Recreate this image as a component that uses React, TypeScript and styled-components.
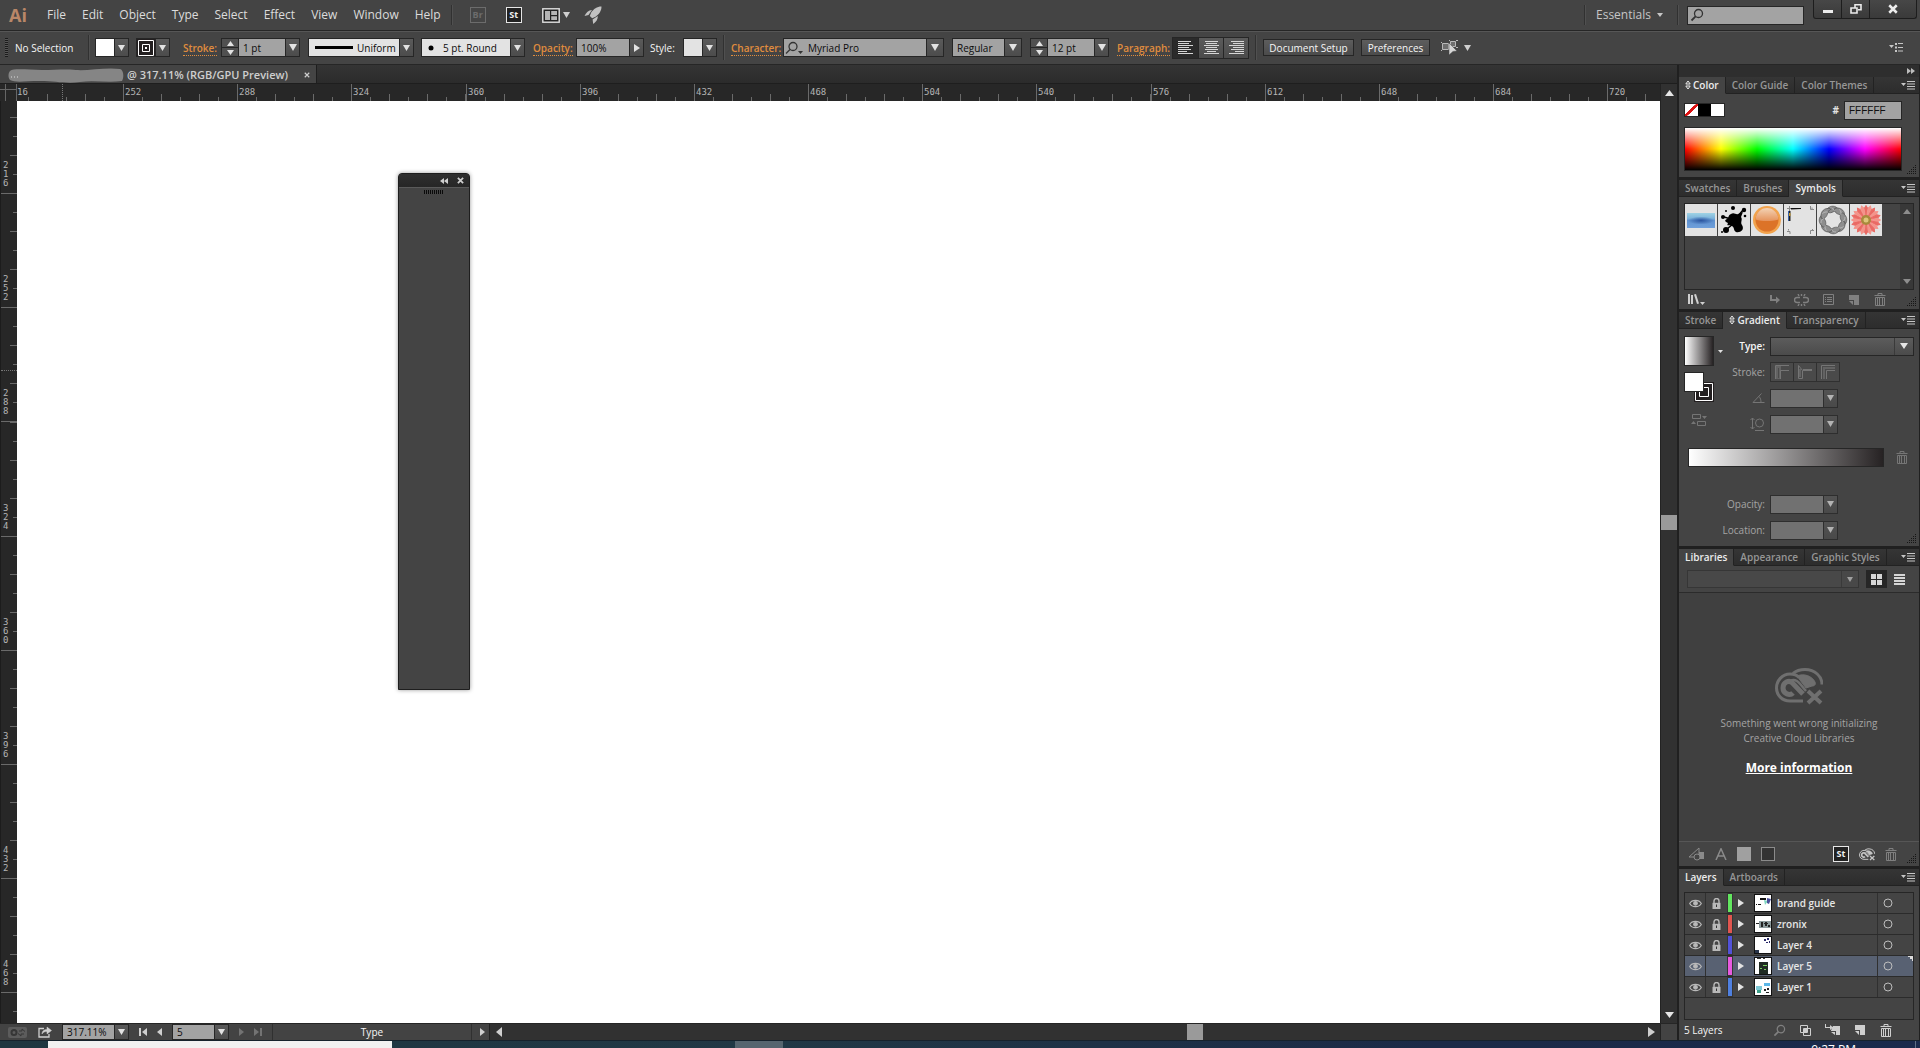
import React from "react";
import styled, { createGlobalStyle } from "styled-components";

const UI = `"Open Sans", "Noto Sans", sans-serif`;
const ORANGE = "#e08d3e";
const LINE = "#262626";

const Global = createGlobalStyle`
  html, body { margin: 0; height: 100%; background: #1f3542; overflow: hidden; }
  *, *::before, *::after { box-sizing: border-box; }
  button, input, select { font: inherit; color: inherit; margin: 0; padding: 0; border: 0; background: none; border-radius: 0; outline: none; }
  button { cursor: default; display: inline-flex; align-items: center; justify-content: center; flex: none; }
  select { appearance: none; }
  svg { display: block; flex: none; }
  p { margin: 0; }
`;

/* ---------- shell ---------- */

const Screen = styled.div`
  display: flex;
  flex-direction: column;
  height: 100vh;
  font: 10px/14px ${UI};
  color: #e2e2e2;
  background: #434343;
`;

const Workspace = styled.div`
  flex: 1;
  min-height: 0;
  display: grid;
  grid-template-columns: minmax(0, 1fr) 243px;
`;

/* ---------- menu bar ---------- */

const MenuBar = styled.header`
  display: flex;
  align-items: center;
  height: 31px;
  padding: 0 3px 0 9px;
  background: #444;
  border-bottom: 1px solid ${LINE};
  font-size: 12px;
  line-height: 16px;
`;

const Logo = styled.div`
  width: 30px;
  font: 700 18px/24px "Open Sans", sans-serif;
  color: #b98768;
`;

const MenuItem = styled.button`
  padding: 0 8px;
  height: 24px;
  color: #dcdcdc;
`;

const Rule = styled.span<{ $h?: number }>`
  flex: none;
  width: 2px;
  height: ${(p) => p.$h ?? 20}px;
  background: #313131;
  border-right: 1px solid #505050;
`;

const AppBadge = styled.button<{ $dim?: boolean }>`
  width: 16px;
  height: 16px;
  border: 1px solid ${(p) => (p.$dim ? "#6c6c6c" : "#e6e6e6")};
  background: ${(p) => (p.$dim ? "#454545" : "#222")};
  color: ${(p) => (p.$dim ? "#6c6c6c" : "#f0f0f0")};
  font: 700 9px/12px ${UI};
`;

const Tools = styled.div`
  display: flex;
  align-items: center;
  gap: 20px;
  padding-left: 17px;
`;

const ToolPair = styled.div`
  display: flex;
  align-items: center;
  gap: 14px;
`;

const IconButton = styled.button<{ $c?: string }>`
  gap: 3px;
  color: ${(p) => p.$c ?? "#cfcfcf"};
`;

const Push = styled.span`
  flex: 1;
`;

const WorkspacePick = styled.label`
  display: flex;
  align-items: center;
  gap: 2px;
  padding: 0 14px 0 10px;
  color: #c6c6c6;
  select { width: 59px; }
`;

const SearchBox = styled.label`
  display: flex;
  align-items: center;
  width: 117px;
  height: 19px;
  margin-left: 8px;
  padding-left: 2px;
  color: #333;
  background: #a3a3a3;
  border: 1px solid ${LINE};
  input { flex: 1; min-width: 0; }
`;

const WindowButtons = styled.div`
  display: flex;
  align-self: flex-start;
  margin-left: 9px;
  height: 19px;
  border: 1px solid #1d1d1d;
  border-top: 0;
  border-radius: 0 0 3px 3px;
  background: linear-gradient(#474747, #3a3a3a);
  color: #ececec;
`;

const WindowButton = styled.button<{ $w: number }>`
  width: ${(p) => p.$w}px;
  & + & { border-left: 1px solid #1d1d1d; }
`;

/* ---------- control bar ---------- */

const ControlBar = styled.div`
  display: flex;
  align-items: center;
  height: 34px;
  padding: 0 17px 1px 5px;
  background: #444;
  border-top: 1px solid #565656;
  border-bottom: 1px solid ${LINE};
`;

const Grip = styled.span`
  width: 3px;
  height: 19px;
  background: repeating-linear-gradient(#1b1b1b 0 1px, #555 1px 2px);
`;

const Title = styled.span`
  width: 80px;
  padding-left: 7px;
  font-weight: 500;
  color: #f6f6f6;
  white-space: nowrap;
`;

const StyleLabel = styled.label`
  width: 33px;
  font-weight: 500;
  color: #f6f6f6;
`;

const Group = styled.div<{ $l?: number }>`
  display: flex;
  align-items: center;
  flex: none;
  margin-left: ${(p) => p.$l ?? 8}px;
`;

const PanelLink = styled.a<{ $w: number }>`
  flex: none;
  width: ${(p) => p.$w}px;
  color: ${ORANGE};
  font-weight: 600;
  text-decoration: none;
  white-space: nowrap;
  span { border-bottom: 1px dotted ${ORANGE}; }
`;

const Box = styled.div<{ $w?: number; $bg?: string; $dim?: boolean }>`
  display: flex;
  align-items: stretch;
  width: ${(p) => (p.$w ? p.$w + "px" : "auto")};
  height: 19px;
  border: 1px solid ${LINE};
  color: #0c0c0c;
  background: ${(p) => p.$bg ?? "#a3a3a3"};
  opacity: ${(p) => (p.$dim ? 0.7 : 1)};
  svg { align-self: center; }
  input, select { flex: 1; min-width: 0; width: 0; padding: 0 0 0 4px; }
`;

const Drop = styled.button<{ $w?: number }>`
  width: ${(p) => p.$w ?? 14}px;
  border-left: 1px solid ${LINE};
  background: linear-gradient(#5a5a5a, #4c4c4c);
  color: #e2e2e2;
`;

const Stepper = styled.div`
  display: grid;
  width: 17px;
  height: 19px;
  border: 1px solid ${LINE};
  border-right: 0;
  background: #505050;
  color: #e2e2e2;
  button + button { border-top: 1px solid ${LINE}; }
`;

const Chip = styled.span<{ $c: string }>`
  flex: 1;
  background: ${(p) => p.$c};
  display: flex;
  align-items: center;
  justify-content: center;
`;

const AlignGroup = styled.div`
  display: flex;
  height: 22px;
  border: 1px solid ${LINE};
`;

const AlignButton = styled.button<{ $on?: boolean }>`
  width: 25px;
  color: #d6d6d6;
  background: ${(p) => (p.$on ? "#2b2b2b" : "linear-gradient(#5b5b5b, #4b4b4b)")};
  & + & { border-left: 1px solid ${LINE}; }
`;

const PushButton = styled.button<{ $w: number }>`
  width: ${(p) => p.$w}px;
  height: 17px;
  border: 1px solid ${LINE};
  background: linear-gradient(#5d5d5d, #4b4b4b);
  color: #f6f6f6;
  font-weight: 500;
  white-space: nowrap;
`;

/* ---------- document ---------- */

const Doc = styled.main`
  display: grid;
  grid-template-columns: 17px minmax(0, 1fr) 17px;
  grid-template-rows: 19px 17px minmax(0, 1fr) 17px;
  min-height: 0;
`;

const TabStrip = styled.div`
  grid-column: 1 / -1;
  display: flex;
  background: linear-gradient(#343434, #2b2b2b);
  border-bottom: 1px solid #1e1e1e;
`;

const DocTab = styled.div`
  display: flex;
  align-items: center;
  width: 317px;
  padding: 2px 0 0 8px;
  background: #444;
  border-right: 1px solid #1e1e1e;
  font-size: 11px;
  font-weight: 600;
  color: #cfcfcf;
  white-space: nowrap;
  button { margin-left: auto; margin-right: 6px; color: #d0d0d0; }
`;

const DocName = styled.span`
  padding-left: 3px;
`;

const Corner = styled.div`
  background:
    linear-gradient(#666, #666) 0 5px / 100% 1px no-repeat,
    linear-gradient(#666, #666) 5px 0 / 1px 100% no-repeat,
    linear-gradient(#666, #666) 16px 0 / 1px 100% no-repeat,
    #272727;
`;

const HRuler = styled.div`
  position: relative;
  display: flex;
  overflow: hidden;
  background: #272727;
`;

const HSegment = styled.span<{ $len: number; $clip?: boolean }>`
  flex: none;
  width: ${(p) => p.$len}px;
  margin-left: ${(p) => (p.$clip ? -8 : 0)}px;
  padding-left: ${(p) => (p.$clip ? 8 : 2)}px;
  font: 9px/17px "DejaVu Sans Mono", monospace;
  color: #b4b4b4;
  background:
    linear-gradient(#6a6a6a, #6a6a6a) 0 0 / 1px 100% no-repeat,
    linear-gradient(to right, #6a6a6a 1px, transparent 1px) 0 100% / 38px 7px repeat-x,
    linear-gradient(to right, #6a6a6a 1px, transparent 1px) 0 100% / 19px 4px repeat-x;
`;

const HCursor = styled.span`
  position: absolute;
  left: 45px;
  top: 0;
  height: 100%;
  border-left: 1px dotted #777;
`;

const VRuler = styled.div`
  position: relative;
  overflow: hidden;
  background: #272727;
  border-left: 1px solid #1c1c1c;
`;

const VSegment = styled.span<{ $len: number; $first?: boolean }>`
  display: flex;
  flex-direction: column;
  justify-content: flex-end;
  height: ${(p) => p.$len}px;
  margin-top: ${(p) => (p.$first ? -21 : 0)}px;
  padding: 0 0 6px 2px;
  font: 9px/9px "DejaVu Sans Mono", monospace;
  color: #b4b4b4;
  background:
    linear-gradient(#6a6a6a, #6a6a6a) 0 100% / 100% 1px no-repeat,
    linear-gradient(to top, #6a6a6a 1px, transparent 1px) 100% 100% / 7px 38px repeat-y,
    linear-gradient(to top, #6a6a6a 1px, transparent 1px) 100% 100% / 4px 19px repeat-y;
  b { font-weight: 400; }
`;

const VCursor = styled.span`
  position: absolute;
  left: 0;
  top: 269px;
  width: 100%;
  border-top: 1px dotted #777;
`;

const Canvas = styled.div`
  position: relative;
  background: #fff;
`;

const VScroll = styled.div`
  grid-column: 3;
  grid-row: 2 / 4;
  display: flex;
  flex-direction: column;
  background: #313131;
  border-left: 1px solid #222;
  color: #e6e6e6;
  button { height: 17px; }
`;

const VTrack = styled.div`
  flex: 1;
  display: flex;
  flex-direction: column;
  &::before { content: ""; flex: 414; }
  &::after { content: ""; flex: 476; }
`;

const VThumb = styled.div`
  height: 15px;
  background: #9a9a9a;
`;

const StatusBar = styled.footer`
  grid-column: 1 / -1;
  display: flex;
  align-items: center;
  background: #434343;
  border-top: 1px solid ${LINE};
  padding-left: 8px;
`;

const StatusBox = styled(Box)`
  height: 16px;
`;

const StatusPart = styled.div<{ $w: number; $gap?: number }>`
  flex: none;
  display: flex;
  align-items: center;
  gap: ${(p) => p.$gap ?? 8}px;
  width: ${(p) => p.$w}px;
`;

const StatusText = styled.div`
  flex: none;
  display: flex;
  align-items: center;
  justify-content: center;
  width: 200px;
  height: 16px;
  border: solid #303030;
  border-width: 0 1px;
  font-weight: 500;
  color: #f6f6f6;
`;

const HScroll = styled.div`
  flex: 1;
  display: flex;
  align-items: center;
  height: 16px;
  padding: 0 5px 0 6px;
  background: #313131;
  border-left: 1px solid #222;
  color: #e6e6e6;
`;

const HTrack = styled.div`
  flex: 1;
  display: flex;
  height: 100%;
  &::before { content: ""; flex: 685; }
  &::after { content: ""; flex: 445; }
`;

const HThumb = styled.div`
  width: 16px;
  background: #9a9a9a;
`;

const ScrollCorner = styled.div`
  width: 17px;
  height: 16px;
  border-left: 1px solid #222;
  background: #434343;
`;

const Palette = styled.section`
  position: absolute;
  left: 381px;
  top: 72px;
  width: 72px;
  height: 517px;
  display: flex;
  flex-direction: column;
  border: 1px solid #1e1e1e;
  border-radius: 4px 4px 0 0;
  background: #444;
  box-shadow: 0 0 4px rgba(0, 0, 0, 0.4);
`;

const PaletteHead = styled.div`
  display: flex;
  justify-content: flex-end;
  align-items: center;
  gap: 9px;
  height: 14px;
  padding-right: 5px;
  border-bottom: 1px solid #5a5a5a;
  border-radius: 3px 3px 0 0;
  background: linear-gradient(#2f2f2f, #262626);
  color: #c4c4c4;
`;

const PaletteGrip = styled.span`
  align-self: center;
  width: 20px;
  height: 4px;
  margin-top: 2px;
  background: repeating-linear-gradient(to right, #0a0a0a 0 1px, #444 1px 2px);
`;

/* ---------- dock ---------- */

const Dock = styled.aside`
  display: flex;
  flex-direction: column;
  min-height: 0;
  border-left: 2px solid #202020;
  border-right: 1px solid #202020;
  background: #202020;
`;

const DockHead = styled.div`
  display: flex;
  align-items: center;
  justify-content: flex-end;
  height: 12px;
  padding-right: 4px;
  background: #2e2e2e;
  color: #bdbdbd;
`;

const Panel = styled.section<{ $grow?: boolean }>`
  display: flex;
  flex-direction: column;
  flex: ${(p) => (p.$grow ? "1 1 0" : "none")};
  min-height: 0;
  margin-bottom: 3px;
  background: #444;
  &:last-child { margin-bottom: 0; }
`;

const Tabs = styled.div`
  display: flex;
  height: 17px;
  background: linear-gradient(#353535, #2c2c2c);
`;

const Tab = styled.button<{ $on?: boolean }>`
  gap: 2px;
  padding: 0 6px;
  font-weight: 600;
  color: ${(p) => (p.$on ? "#ececec" : "#969696")};
  background: ${(p) => (p.$on ? "#444" : "none")};
  border-right: 1px solid #222;
  border-bottom: 1px solid ${(p) => (p.$on ? "#444" : "#222")};
`;

const TabFill = styled.div`
  flex: 1;
  display: flex;
  align-items: center;
  justify-content: flex-end;
  padding-right: 4px;
  border-bottom: 1px solid #222;
`;

const Body = styled.div`
  position: relative;
  flex: 1;
  min-height: 0;
  display: flex;
  flex-direction: column;
  padding: 0 5px;
`;

const Resize = styled.span`
  position: absolute;
  right: 2px;
  bottom: 2px;
  color: #161616;
`;

const ColorRow = styled.div`
  display: flex;
  align-items: center;
  justify-content: space-between;
  height: 20px;
  margin-top: 6px;
  padding-right: 12px;
`;

const MiniSwatches = styled.div`
  display: flex;
  border: 1px solid ${LINE};
`;

const MiniSwatch = styled.button<{ $bg: string }>`
  width: 13px;
  height: 12px;
  background: ${(p) => p.$bg};
`;

const HexField = styled.label`
  display: flex;
  align-items: center;
  gap: 5px;
  font-weight: 700;
  input {
    width: 58px;
    height: 19px;
    padding-left: 4px;
    border: 1px solid ${LINE};
    background: #a3a3a3;
    color: #111;
    font: 10px/14px "Liberation Sans", Arial, sans-serif;
  }
`;

const Spectrum = styled.div`
  height: 44px;
  margin: 7px 12px 6px 0;
  border: 1px solid ${LINE};
  background:
    linear-gradient(#fff, rgba(255, 255, 255, 0) 50%),
    linear-gradient(rgba(0, 0, 0, 0) 50%, #000),
    linear-gradient(to right, #f00, #ff0, #0f0, #0ff, #00f, #f0f, #f00);
`;

const SymbolWell = styled.div`
  display: flex;
  justify-content: space-between;
  height: 87px;
  margin-top: 6px;
  border: 1px solid ${LINE};
`;

const SymbolList = styled.div`
  display: flex;
  align-items: flex-start;
  gap: 1px;
`;

const SymbolTile = styled.button`
  width: 32px;
  height: 32px;
  background: #e3e3e3;
`;

const MiniScroll = styled.div`
  display: flex;
  flex-direction: column;
  justify-content: space-between;
  align-items: center;
  width: 13px;
  padding: 5px 0;
  background: #383838;
  color: #8d8d8d;
`;

const PanelFoot = styled.div<{ $h: number; $gap: number; $l?: number; $r: number }>`
  display: flex;
  align-items: center;
  gap: ${(p) => p.$gap}px;
  height: ${(p) => p.$h}px;
  padding: 0 ${(p) => p.$r}px 0 ${(p) => p.$l ?? 0}px;
  color: #808080;
`;

const GradTop = styled.div`
  display: grid;
  grid-template-columns: 39px minmax(0, 1fr);
  padding-top: 7px;
`;

const GradSide = styled.div`
  display: flex;
  flex-direction: column;
  gap: 6px;
`;

const GradPick = styled.div`
  display: flex;
  align-items: center;
  gap: 4px;
`;

const GradSwatch = styled.button`
  width: 30px;
  height: 30px;
  border: 1px solid ${LINE};
  background: linear-gradient(to right, #fff, #262223);
`;

const FillStroke = styled.div`
  position: relative;
  width: 30px;
  height: 30px;
  margin-bottom: 5px;
`;

const FillBox = styled.button`
  position: absolute;
  left: 0;
  top: 0;
  width: 20px;
  height: 20px;
  border: 1px solid ${LINE};
  background: #fff;
`;

const StrokeBox = styled.button`
  position: absolute;
  right: 0;
  bottom: 0;
  width: 20px;
  height: 20px;
`;

const Fields = styled.div`
  display: flex;
  flex-direction: column;
  gap: 6px;
`;

const Field = styled.div`
  display: grid;
  grid-template-columns: 42px minmax(0, 1fr);
  column-gap: 5px;
  align-items: center;
  height: 20px;
`;

const FieldLabel = styled.label<{ $on?: boolean }>`
  display: flex;
  justify-content: flex-end;
  font-weight: ${(p) => (p.$on ? 600 : 500)};
  color: ${(p) => (p.$on ? "#f6f6f6" : "#a4a4a4")};
`;

const WideSelect = styled.div<{ $dim?: boolean }>`
  display: flex;
  align-items: center;
  width: 100%;
  height: ${(p) => (p.$dim ? 18 : 19)}px;
  padding-right: 5px;
  border: 1px solid ${(p) => (p.$dim ? "#363636" : LINE)};
  background: ${(p) => (p.$dim ? "#484848" : "linear-gradient(#5c5c5c, #4b4b4b)")};
  color: ${(p) => (p.$dim ? "#a0a0a0" : "#e6e6e6")};
  select { flex: 1; min-width: 0; height: 100%; border-right: 1px solid #3a3a3a; margin-right: 5px; }
`;

const StrokeModes = styled.div`
  display: flex;
  width: 70px;
  border: 1px solid #303030;
  button { flex: 1; height: 18px; color: #757575; background: #4a4a4a; }
  button + button { border-left: 1px solid #303030; }
`;

const GradBarRow = styled.div`
  display: flex;
  align-items: center;
  gap: 12px;
  padding: 14px 6px 27px 4px;
  color: #767676;
`;

const GradBar = styled.div`
  flex: 1;
  height: 19px;
  border: 1px solid ${LINE};
  background: linear-gradient(to right, #fff, #262223);
`;

const GradBottom = styled(Fields)`
  padding: 0 0 6px 39px;
`;

const LibBar = styled.div`
  display: flex;
  align-items: center;
  gap: 7px;
  height: 27px;
  margin: 0 -5px;
  padding: 0 9px 0 8px;
  border-bottom: 1px solid #2b2b2b;
`;

const ViewSwitch = styled.div`
  display: flex;
  gap: 2px;
`;

const ViewButton = styled.button<{ $on?: boolean }>`
  width: 21px;
  height: 18px;
  background: ${(p) => (p.$on ? "#262626" : "none")};
  color: #d6d6d6;
`;

const LibMessage = styled.div`
  flex: 1;
  display: flex;
  flex-direction: column;
  align-items: center;
  justify-content: center;
  margin: 0 -5px;
  padding-top: 10px;
  background: #404040;
  border-bottom: 1px solid #565656;
  color: #a4a4a4;
  text-align: center;
  svg { margin-bottom: 11px; color: #6f6f6f; }
  p { line-height: 15px; }
  a { margin-top: 14px; color: #fff; font: 700 12px/16px ${UI}; }
`;

const SquareIcon = styled.button<{ $bg: string; $b: string }>`
  width: 14px;
  height: 14px;
  background: ${(p) => p.$bg};
  border: 1px solid ${(p) => p.$b};
`;

const LayerTable = styled.div`
  height: 128px;
  margin-top: 6px;
  border: 1px solid ${LINE};
`;

const LayerRow = styled.div<{ $on?: boolean }>`
  position: relative;
  display: grid;
  grid-template-columns: 21px 22px 4px 18px 22px minmax(0, 1fr) 35px;
  align-items: center;
  height: 21px;
  border-bottom: 1px solid #2b2b2b;
  background: ${(p) => (p.$on ? "#586172" : "#444")};
  color: #b9b9b9;
`;

const Cell = styled.button`
  height: 20px;
  border-right: 1px solid #303030;
`;

const LayerColor = styled.span<{ $c: string }>`
  height: 18px;
  background: ${(p) => p.$c};
  outline: 1px solid #353535;
`;

const Thumb = styled.span`
  justify-self: end;
  width: 18px;
  height: 18px;
  border: 1px solid #111;
  background: #fff;
`;

const LayerName = styled.span`
  padding-left: 5px;
  height: 20px;
  line-height: 20px;
  font-weight: 600;
  border-right: 1px solid #303030;
  color: #e6e6e6;
`;

const Target = styled.button`
  width: 20px;
  height: 20px;
`;

const SelectedCorner = styled.span`
  position: absolute;
  right: 0;
  top: 0;
  width: 5px;
  height: 5px;
  background: linear-gradient(to bottom left, #ddd 50%, transparent 50%);
`;

const Count = styled.span`
  flex: 1;
  font-weight: 500;
  color: #f6f6f6;
`;

/* ---------- system task bar ---------- */

const TaskBar = styled.div`
  display: flex;
  height: 8px;
  overflow: hidden;
  padding-left: 48px;
  border-top: 1px solid #16222c;
  background: linear-gradient(to right, #1f3640, #213845 40%, #1b2a47 75%, #1a2a4c);
`;

const TaskSearch = styled.div`
  width: 344px;
  background: #f1f1f1;
`;

const TaskItem = styled.div`
  width: 48px;
  margin-left: 343px;
  background: #56656f;
`;

const Clock = styled.time`
  margin-left: auto;
  padding: 2px 59px 0 0;
  font: 12px/14px ${UI};
  color: #fff;
`;

const ShowDesktop = styled.span`
  width: 5px;
  border-left: 1px solid #5f6f86;
`;

/* ---------- icons ---------- */

const Down = ({ w = 7, h = 6 }: { w?: number; h?: number }) => (
  <svg width={w} height={h} viewBox="0 0 8 6" preserveAspectRatio="none" fill="currentColor"><path d="M0 0h8L4 6z" /></svg>
);
const Up = ({ w = 7, h = 6 }: { w?: number; h?: number }) => (
  <svg width={w} height={h} viewBox="0 0 8 6" preserveAspectRatio="none" fill="currentColor"><path d="M0 6h8L4 0z" /></svg>
);
const Right = ({ w = 6, h = 8 }: { w?: number; h?: number }) => (
  <svg width={w} height={h} viewBox="0 0 6 8" preserveAspectRatio="none" fill="currentColor"><path d="M0 0v8l6-4z" /></svg>
);
const Left = ({ w = 6, h = 8 }: { w?: number; h?: number }) => (
  <svg width={w} height={h} viewBox="0 0 6 8" preserveAspectRatio="none" fill="currentColor"><path d="M6 0v8L0 4z" /></svg>
);
const Cross = ({ s = 7, t = 1.5 }: { s?: number; t?: number }) => (
  <svg width={s} height={s} viewBox="0 0 8 8" stroke="currentColor" strokeWidth={t}><path d="M1 1l6 6M7 1L1 7" /></svg>
);
const Lens = ({ s = 14 }: { s?: number }) => (
  <svg width={s} height={s} viewBox="0 0 14 14" fill="none" stroke="currentColor" strokeWidth="1.3"><circle cx="8.5" cy="5.5" r="4" /><path d="M5.6 8.4L1.5 12.5" strokeWidth="1.8" /></svg>
);
const PanelMenu = () => (
  <svg width="14" height="9" viewBox="0 0 14 9" fill="currentColor"><path d="M0 2h5L2.500 5zM6 0h8v1H6zM6 2.500h8v1H6zM6 5h8v1H6zM6 7.500h8v1H6z" /></svg>
);
const BarMenu = () => (
  <svg width="14" height="9" viewBox="0 0 14 9" fill="currentColor"><path d="M0 2h5L2.500 5zM6 0h2v2H6zM9 0h5v1H9zM6 3.500h2v2H6zM9 4h5v1H9zM6 7h2v2H6zM9 7.500h5v1H9z" /></svg>
);
const Double = ({ flip }: { flip?: boolean }) => (
  <svg width="8" height="6" viewBox="0 0 8 6" fill="currentColor"><path d={flip ? "M4 0v6L0 3zM8 0v6L4 3z" : "M0 0v6l4-3zM4 0v6l4-3z"} /></svg>
);
const Sort = () => (
  <svg width="6" height="10" viewBox="0 0 6 10" fill="none" stroke="currentColor"><path d="M.8 4L3 1l2.200 3zM.8 6L3 9l2.200-3z" /></svg>
);
const ResizeDots = () => (
  <svg width="10" height="10" viewBox="0 0 10 10" fill="currentColor">
    {[0, 1, 2, 3, 4].flatMap((r) => Array.from({ length: r + 1 }, (_, c) => <rect key={`${r}${c}`} x={8 - c * 2} y={r * 2} width="1" height="1" />))}
  </svg>
);
const Trash = () => (
  <svg width="12" height="13" viewBox="0 0 12 13" fill="none" stroke="currentColor"><path d="M.5 2.500h11M4 2.500v-2h4v2M1.500 4.500h9v8h-9zM3.500 5v7M5.500 5v7M8.500 5v7" /></svg>
);
const Page = () => (
  <svg width="12" height="12" viewBox="0 0 12 12" fill="currentColor"><path d="M1 1h10v10H6V6H1zM1 7h4v4z" /></svg>
);
const Rocket = () => (
  <svg width="18" height="18" viewBox="0 0 18 18" fill="#c2c2c2"><path d="M17.500.5C13 .5 9.500 3 7.200 6.600L5.800 10l2.400 2.200 3.300-1.400C15 8.400 17.500 5 17.500.5zM8 4C4.600 4.200 2 6.600.5 10l4-1zM13.800 10c.2 3-1.600 6-4.600 8l-.6-4.600z" /></svg>
);
const Layout = () => (
  <svg width="18" height="15" viewBox="0 0 18 15"><rect x=".8" y=".8" width="16.400" height="13.400" fill="#222" stroke="#e2e2e2" strokeWidth="1.400" /><path d="M3 3h5v9H3zM9.200 3H15v4H9.200zM9.200 8.200H15V12H9.200z" fill="#b5b5b5" /></svg>
);
const Lines = ({ kind }: { kind: "l" | "c" | "r" }) => (
  <svg width="15" height="13" viewBox="0 0 15 13" fill="currentColor">
    {[13, 11, 15, 11, 13, 9, 15].map((w, i) => <rect key={i} x={kind === "l" ? 0 : kind === "c" ? (15 - w) / 2 : 15 - w} y={i * 2} width={w} height="1" />)}
  </svg>
);
const CloudError = ({ w, h }: { w: number; h: number }) => (
  <svg width={w} height={h} viewBox="0 0 48 37" fill="none" stroke="currentColor">
    <path d="M18 5.500C22 2 26 1.500 30 1.500c10 0 17 7 17 15" strokeWidth="3" />
    <path d="M28 33H15C7 33 1.500 27 1.500 20S7 6 15 6c4 0 7 1 9 3.500" strokeWidth="3" />
    <path d="M28 26L17 14.500C14 12 8 14 8 20s7 8 10 5" strokeWidth="5" />
    <path d="M16 12.500c5-2 8 2 10 4.500l5 6" strokeWidth="2.500" />
    <path d="M22 8c7-3 15 0 18 6 1 2 0 4-3 4l-6 2z" fill="currentColor" strokeWidth="1" />
    <path d="M33 23l13 12M46 23L33 35" strokeWidth="4" />
  </svg>
);
const Eye = () => (
  <svg width="13" height="9" viewBox="0 0 13 9" fill="none" stroke="currentColor" strokeWidth="1.200"><path d="M.7 4.500C3 .3 10 .3 12.300 4.500 10 8.700 3 8.700.7 4.500z" /><circle cx="6.500" cy="4.300" r="1.800" fill="currentColor" /></svg>
);
const Lock = () => (
  <svg width="9" height="11" viewBox="0 0 9 11"><path d="M2 5V3a2.500 2.500 0 015 0v2" fill="none" stroke="currentColor" strokeWidth="1.400" /><path d="M.5 4.800h8V11h-8z" fill="currentColor" /><path d="M4 6.500h1v2.500H4z" fill="#333" /></svg>
);
const Ring = () => (
  <svg width="10" height="10" viewBox="0 0 10 10" fill="none" stroke="#bdbdbd"><circle cx="5" cy="5" r="4" /></svg>
);

const SymbolArt = [
  {
    name: "Banner",
    art: (
      <svg width="32" height="32" viewBox="0 0 32 32">
        <defs>
          <linearGradient id="bn" x2="0" y2="1"><stop offset="0" stopColor="#9fd3e4" /><stop offset=".35" stopColor="#7db4dc" /><stop offset=".5" stopColor="#5f92cf" /><stop offset="1" stopColor="#6f9fdb" /></linearGradient>
          <radialGradient id="bnc"><stop offset="0" stopColor="#2b55a0" /><stop offset="1" stopColor="#2b55a0" stopOpacity="0" /></radialGradient>
        </defs>
        <path d="M2 9h28v15H2z" fill="url(#bn)" />
        <ellipse cx="16" cy="16.500" rx="13" ry="4" fill="url(#bnc)" />
      </svg>
    ),
  },
  {
    name: "Splatter",
    art: (
      <svg width="32" height="32" viewBox="0 0 32 32">
        <path d="M13 10c3-2 5 1 7 0l5-2-2 5c2 3-1 5 1 8 3 5-2 8-6 7-3-2-1-4-4-6s-6 1-4-3c-3-1-4-3-1-4 2-1 1-4 4-5z" />
        <circle cx="15" cy="4" r="2" /><circle cx="26" cy="6" r="2.200" /><circle cx="5" cy="13" r="2" /><circle cx="8" cy="26" r="3" /><circle cx="4" cy="28" r="1" /><circle cx="27" cy="12" r="1.300" /><circle cx="8" cy="7" r="1" />
        <path d="M25 6l-5 6M6 13l7 2M9 25l6-5" stroke="#000" strokeWidth="1.500" />
      </svg>
    ),
  },
  {
    name: "Button",
    art: (
      <svg width="32" height="32" viewBox="0 0 32 32">
        <defs><linearGradient id="gl" x2="0" y2="1"><stop offset="0" stopColor="#f3d2b4" /><stop offset="1" stopColor="#e5935c" /></linearGradient></defs>
        <circle cx="16" cy="16" r="14" fill="#f2a34c" /><circle cx="16" cy="16" r="11.500" fill="#dc7328" /><path d="M4.600 15.500a11.400 11.400 0 0122.800 0c-7 2-16 2-22.800 0z" fill="url(#gl)" />
      </svg>
    ),
  },
  {
    name: "Crop marks",
    art: (
      <svg width="32" height="32" viewBox="0 0 32 32" stroke="#8a8a8a" fill="none">
        <path d="M3 4.500h4M5.500 2v5M26.500 2v3.500H30M28 6V3.500M3 27.500h3V30M4.500 25v1.500M26.500 30v-3.500H30M28.500 25v2" />
        <path d="M7 4h10v1L7 5.500z" fill="#111" stroke="none" /><path d="M4 7h2.500v10H4z" fill="#222" stroke="none" /><path d="M4 9h2.500v3H4z" fill="#c79a2c" stroke="none" /><path d="M4 7h1v10H4z" fill="#3a62a8" stroke="none" />
      </svg>
    ),
  },
  {
    name: "Knot ring",
    art: (
      <svg width="32" height="32" viewBox="0 0 32 32" fill="#8e8e8e" stroke="#444" strokeWidth=".6">
        {Array.from({ length: 8 }, (_, i) => <path key={i} transform={`rotate(${i * 45} 16 16)`} d="M9 6.500C11 3 15 1 19 3c1 1 3 2 4 4-3-1-5-.5-7 1-3 1.500-6 1-7-1.500z" />)}
        {Array.from({ length: 8 }, (_, i) => <path key={i} transform={`rotate(${i * 45} 16 16)`} d="M13 4c2 0 4 1 5 3" stroke="#ccc" fill="none" />)}
      </svg>
    ),
  },
  {
    name: "Gerbera",
    art: (
      <svg width="32" height="32" viewBox="0 0 32 32">
        {Array.from({ length: 20 }, (_, i) => <path key={i} d="M16 14l-1.500-10L16 1.500 17.500 4z" fill={i % 2 ? "#f4938a" : "#ea6a64"} stroke={i % 2 ? "#f4938a" : "#ea6a64"} strokeWidth="1" transform={`rotate(${i * 18} 16 16)`} />)}
        <circle cx="16" cy="16" r="5" fill="#a88a3c" /><circle cx="16" cy="16" r="2.500" fill="#dcc67a" />
      </svg>
    ),
  },
];

const thumbs: Record<string, React.ReactNode> = {
  "brand guide": <><path d="M5 3h6v2H5z" fill="#111" /><path d="M9 5l4 1-3 4z" fill="#7fd6c0" /><path d="M12 3l4 1-2 5-2-1z" fill="#4a4f9a" /><path d="M1 9h1v1H1zM3 9h3v1H3z" fill="#111" /></>,
  zronix: <><path d="M4 5h12v7H4z" fill="#8c9a9c" /><path d="M6 6h2v5H6zM9 7h4v1H9zM10 6h2v4h-2zM13 9h2v2h-2zM1 7h3v1H1z" fill="#222" /></>,
  "Layer 4": <><path d="M9 2h2v2H9zM12 1h2v2h-2zM14 4h1v2h-1zM11 5h2v1h-2z" fill="#2a2a6a" /><path d="M0 13h4v3H0z" fill="#28344a" /></>,
  "Layer 5": <><path d="M4 4h9v12H4z" fill="#1f2a22" /><path d="M2 0h4v1H2zM8 0h2v1H8z" fill="#333" /><path d="M8 7h4v1H8zM5 10h2v1H5zM9 11h2v1H9z" fill="#77d05c" /></>,
  "Layer 1": <><path d="M1 7h6v4H1z" fill="#7fc9d6" /><path d="M9 4h6v3H9z" fill="#5bb7e8" /><path d="M2 11h4v3H2z" fill="#3ea08a" /><path d="M9 10h2v2H9zM12 9h2v2h-2zM11 13h3v1h-3z" fill="#222" /></>,
};

/* ---------- data ---------- */

const MENUS = ["File", "Edit", "Object", "Type", "Select", "Effect", "View", "Window", "Help"];
const ZOOM = 3.1711;
const STEP = 36;
const segment = (i: number) => Math.round((i + 1) * STEP * ZOOM) - Math.round(i * STEP * ZOOM);
const H_TICKS = Array.from({ length: 15 }, (_, i) => 216 + i * STEP);
const V_TICKS = Array.from({ length: 8 }, (_, i) => 216 + i * STEP);
const LAYERS = [
  { name: "brand guide", color: "#62e65f", locked: true },
  { name: "zronix", color: "#e0554f", locked: true },
  { name: "Layer 4", color: "#5252d8", locked: true },
  { name: "Layer 5", color: "#e85ae0", locked: false },
  { name: "Layer 1", color: "#4f80e0", locked: true },
];

/* ---------- parts ---------- */

function PanelTabs({ items, active, sort }: { items: string[]; active: string; sort?: boolean }) {
  return (
    <Tabs role="tablist">
      {items.map((t) => (
        <Tab key={t} role="tab" $on={t === active} aria-selected={t === active}>
          {sort && t === active && <Sort />}
          {t}
        </Tab>
      ))}
      <TabFill><IconButton aria-label={`${active} panel menu`} $c="#c6c6c6"><PanelMenu /></IconButton></TabFill>
    </Tabs>
  );
}

function DimCombo({ id, label }: { id: string; label?: string }) {
  return (
    <Box $w={68} $dim $bg="#858585">
      <input id={id} aria-label={label} disabled />
      <Drop aria-label={`${label ?? id} presets`}><Down /></Drop>
    </Box>
  );
}

function Controls() {
  return (
    <ControlBar>
      <Grip />
      <Title>No Selection</Title>
      <Rule $h={25} />
      <Group $l={5}>
        <Box $w={34} $bg="#fff"><Chip $c="#fff" /><Drop aria-label="Fill"><Down /></Drop></Box>
      </Group>
      <Group $l={7}>
        <Box $w={34} $bg="#231f20">
          <Chip $c="#231f20"><svg width="16" height="16" viewBox="0 0 16 16" fill="none" stroke="#fff"><path d="M.5.5h15v15H.5zM4.500 4.500h7v7h-7z" /><path d="M7 7h2v2H7z" fill="#fff" stroke="none" /></svg></Chip>
          <Drop aria-label="Stroke color"><Down /></Drop>
        </Box>
      </Group>
      <Group $l={13}>
        <PanelLink href="#stroke" $w={38}><span>Stroke:</span></PanelLink>
        <Stepper><button aria-label="Increase weight"><Up h={5} /></button><button aria-label="Decrease weight"><Down h={5} /></button></Stepper>
        <Box $w={62}><input aria-label="Stroke weight" defaultValue="1 pt" /><Drop aria-label="Weights"><Down w={8} h={7} /></Drop></Box>
      </Group>
      <Group>
        <Box $w={106} $bg="#e3e3e3">
          <svg width="44" height="3" viewBox="0 0 44 3"><path d="M6 0h38v3H6z" /></svg>
          <select aria-label="Width profile"><option>Uniform</option></select>
          <Drop aria-label="Profiles"><Down /></Drop>
        </Box>
      </Group>
      <Group $l={7}>
        <Box $w={104} $bg="#e3e3e3">
          <svg width="17" height="6" viewBox="0 0 17 6"><circle cx="9" cy="3" r="2.500" /></svg>
          <select aria-label="Brush"><option>5 pt. Round</option></select>
          <Drop aria-label="Brushes"><Down /></Drop>
        </Box>
      </Group>
      <Group>
        <PanelLink href="#opacity" $w={43}><span>Opacity:</span></PanelLink>
        <Box $w={68}><input aria-label="Opacity" defaultValue="100%" /><Drop aria-label="Opacity slider"><Right /></Drop></Box>
      </Group>
      <Group $l={6}>
        <StyleLabel htmlFor="gstyle">Style:</StyleLabel>
        <Box $w={34} $bg="#e3e3e3"><Chip $c="#e3e3e3" /><Drop id="gstyle"><Down /></Drop></Box>
      </Group>
      <Group $l={6}><Rule $h={25} /></Group>
      <Group $l={6}>
        <PanelLink href="#character" $w={52}><span>Character:</span></PanelLink>
        <Box $w={161}>
          <svg width="20" height="14" viewBox="0 0 20 14" fill="none" stroke="#333" strokeWidth="1.300"><circle cx="9" cy="5.500" r="4" /><path d="M6 8.500l-4 4" /><path d="M14 10h5l-2.500 3z" fill="#333" stroke="none" /></svg>
          <input aria-label="Font family" defaultValue="Myriad Pro" />
          <Drop aria-label="Fonts" $w={17}><Down w={8} h={7} /></Drop>
        </Box>
      </Group>
      <Group>
        <Box $w={70}><input aria-label="Font style" defaultValue="Regular" /><Drop aria-label="Font styles" $w={17}><Down w={8} h={7} /></Drop></Box>
      </Group>
      <Group>
        <Stepper><button aria-label="Increase size"><Up h={5} /></button><button aria-label="Decrease size"><Down h={5} /></button></Stepper>
        <Box $w={62}><input aria-label="Font size" defaultValue="12 pt" /><Drop aria-label="Sizes"><Down w={8} h={7} /></Drop></Box>
      </Group>
      <Group>
        <PanelLink href="#paragraph" $w={55}><span>Paragraph:</span></PanelLink>
        <AlignGroup>
          <AlignButton $on aria-label="Align left"><Lines kind="l" /></AlignButton>
          <AlignButton aria-label="Align center"><Lines kind="c" /></AlignButton>
          <AlignButton aria-label="Align right"><Lines kind="r" /></AlignButton>
        </AlignGroup>
      </Group>
      <Group $l={6}><Rule $h={25} /></Group>
      <Group $l={6}><PushButton $w={91}>Document Setup</PushButton></Group>
      <Group $l={7}><PushButton $w={69}>Preferences</PushButton></Group>
      <Group $l={11}>
        <IconButton aria-label="Select similar">
          <svg width="17" height="15" viewBox="0 0 17 15" fill="none" stroke="#b8b8b8"><path d="M1.500 3.500h6v6h-6zM9.500 1.500h5v5h-5z" fill="#6e6e6e" /><path d="M0 2.500h1M0 10.500h1M8 .5h1M15 .5h2M15 7.500h2" /><path d="M8 3l8 8-4 .4L8 15z" fill="#d6d6d6" stroke="#444" strokeWidth=".5" /></svg>
        </IconButton>
      </Group>
      <Group $l={6}><IconButton aria-label="Selection options"><Down /></IconButton></Group>
      <Push />
      <IconButton aria-label="Control bar menu" $c="#c6c6c6"><BarMenu /></IconButton>
    </ControlBar>
  );
}

function Document() {
  return (
    <Doc>
      <TabStrip>
        <DocTab>
          <svg width="116" height="15" viewBox="0 0 116 15"><path d="M2 3C6 0 20 2 34 2s22-1 34 0 30-3 44-1c4 1 4 9 2 12-14 2-28-1-42 1S48 13 32 13 8 15 2 12C0 10 0 5 2 3z" fill="#858585" /><path d="M3 9h1M6 9h1M9 9h1" stroke="#ddd" /></svg>
          <DocName>@ 317.11% (RGB/GPU Preview)</DocName>
          <button aria-label="Close document"><Cross s={6} /></button>
        </DocTab>
      </TabStrip>
      <Corner />
      <HRuler>
        {H_TICKS.map((n, i) => <HSegment key={n} $len={segment(i)} $clip={i === 0}>{i === 0 ? n % 100 : n}</HSegment>)}
        <HCursor />
      </HRuler>
      <VScroll>
        <button aria-label="Scroll up"><Up w={9} h={6} /></button>
        <VTrack><VThumb /></VTrack>
        <button aria-label="Scroll down"><Down w={9} h={6} /></button>
      </VScroll>
      <VRuler>
        {V_TICKS.map((n, i) => <VSegment key={n} $len={segment(i)} $first={i === 0}>{String(n).split("").map((d, k) => <b key={k}>{d}</b>)}</VSegment>)}
        <VSegment $len={segment(V_TICKS.length)} />
        <VCursor />
      </VRuler>
      <Canvas>
        <Palette aria-label="Tools">
          <PaletteHead>
            <IconButton aria-label="Collapse"><Double flip /></IconButton>
            <IconButton aria-label="Close"><Cross s={7} t={2} /></IconButton>
          </PaletteHead>
          <PaletteGrip />
        </Palette>
      </Canvas>
      <StatusBar>
        <StatusPart $w={54} $gap={11}>
          <svg width="19" height="11" viewBox="0 0 19 11"><rect width="19" height="11" rx="2" fill="#5c5c5c" /><circle cx="6" cy="5.500" r="2.500" fill="none" stroke="#363636" strokeWidth="2" /><path d="M11 4h3V2l3 2.500M16 7h-3v2l-3-2.500" fill="none" stroke="#363636" /></svg>
          <svg width="14" height="12" viewBox="0 0 14 12" fill="none" stroke="#d0d0d0" strokeWidth="1.300"><path d="M6 2.500H1v8.500h10V8" /><path d="M4 8c0-3 2-4.500 5-4.500V1l4.500 3.500L9 8V5.500C7 5.500 5 6 4 8z" fill="#d0d0d0" strokeWidth=".5" /></svg>
        </StatusPart>
        <StatusBox $w={67}><input aria-label="Zoom level" defaultValue="317.11%" /><Drop aria-label="Zoom levels"><Down /></Drop></StatusBox>
        <StatusPart $w={43} $gap={10}>
          <span />
          <IconButton aria-label="First artboard"><svg width="8" height="8" viewBox="0 0 8 8" fill="currentColor"><path d="M0 0h2v8H0zM8 0v8L3 4z" /></svg></IconButton>
          <IconButton aria-label="Previous artboard"><Left w={5} /></IconButton>
        </StatusPart>
        <StatusBox $w={57}><input aria-label="Artboard" defaultValue="5" /><Drop aria-label="Artboards"><Down /></Drop></StatusBox>
        <StatusPart $w={43} $gap={10}>
          <span />
          <IconButton aria-label="Next artboard" $c="#737373"><Right w={5} /></IconButton>
          <IconButton aria-label="Last artboard" $c="#737373"><svg width="8" height="8" viewBox="0 0 8 8" fill="currentColor"><path d="M6 0h2v8H6zM0 0v8l5-4z" /></svg></IconButton>
        </StatusPart>
        <StatusText>Type</StatusText>
        <StatusPart $w={17}><span /><IconButton aria-label="Status options"><Right w={5} /></IconButton></StatusPart>
        <HScroll>
          <IconButton aria-label="Scroll left"><Left w={6} h={10} /></IconButton>
          <HTrack><HThumb /></HTrack>
          <IconButton aria-label="Scroll right"><Right w={7} h={10} /></IconButton>
        </HScroll>
        <ScrollCorner />
      </StatusBar>
    </Doc>
  );
}

function ColorPanel() {
  return (
    <Panel>
      <PanelTabs items={["Color", "Color Guide", "Color Themes"]} active="Color" sort />
      <Body>
        <ColorRow>
          <MiniSwatches>
            <MiniSwatch aria-label="None" $bg="linear-gradient(to bottom right, #fff 42%, #d11 43% 57%, #fff 58%)" />
            <MiniSwatch aria-label="Black" $bg="#000" />
            <MiniSwatch aria-label="White" $bg="#fff" />
          </MiniSwatches>
          <HexField>#<input defaultValue="FFFFFF" /></HexField>
        </ColorRow>
        <Spectrum />
        <Resize><ResizeDots /></Resize>
      </Body>
    </Panel>
  );
}

function SymbolsPanel() {
  return (
    <Panel>
      <PanelTabs items={["Swatches", "Brushes", "Symbols"]} active="Symbols" />
      <Body>
        <SymbolWell>
          <SymbolList>{SymbolArt.map((s) => <SymbolTile key={s.name} aria-label={s.name}>{s.art}</SymbolTile>)}</SymbolList>
          <MiniScroll><Up w={8} h={5} /><Down w={8} h={5} /></MiniScroll>
        </SymbolWell>
        <PanelFoot $h={19} $gap={14} $l={3} $r={28}>
          <IconButton aria-label="Symbol libraries">
            <svg width="18" height="11" viewBox="0 0 18 11" fill="currentColor"><path d="M1 0h2v10H1zM4 1h2v9H4zM7 .5l2-.5 3 9.500-2 .5zM13 8h5l-2.500 3z" /></svg>
          </IconButton>
          <Push />
          <svg width="10" height="9" viewBox="0 0 10 9" fill="currentColor"><path d="M0 0h2v4h4V1.500L10 5 6 8.500V6H0z" /></svg>
          <svg width="15" height="12" viewBox="0 0 15 12" fill="none" stroke="currentColor" strokeWidth="1.400"><path d="M6 3.500H3a2.500 2.500 0 000 5h3M9 3.500h3a2.500 2.500 0 010 5H9M7.500 0v2M7.500 10v2M4 0l1 2M11 0l-1 2M4 12l1-2M11 12l-1-2" /></svg>
          <svg width="11" height="11" viewBox="0 0 11 11" fill="none" stroke="currentColor"><path d="M.5.5h10v10H.5zM2 3.500h1M4 3.500h5M2 5.500h1M4 5.500h5M2 7.500h1M4 7.500h5" /></svg>
          <Page />
          <Trash />
        </PanelFoot>
        <Resize><ResizeDots /></Resize>
      </Body>
    </Panel>
  );
}

function GradientPanel() {
  return (
    <Panel>
      <PanelTabs items={["Stroke", "Gradient", "Transparency"]} active="Gradient" sort />
      <Body>
        <GradTop>
          <GradSide>
            <GradPick><GradSwatch aria-label="Gradient fill" /><Down w={5} h={3} /></GradPick>
            <FillStroke>
              <StrokeBox aria-label="Stroke"><svg width="20" height="20" viewBox="0 0 20 20" fill="none"><path d="M0 0h20v20H0z" fill="#231f20" /><path d="M1.500 1.500h17v17h-17zM5.500 5.500h9v9h-9z" stroke="#fff" /></svg></StrokeBox>
              <FillBox aria-label="Fill" />
            </FillStroke>
            <svg width="30" height="13" viewBox="0 0 30 13" fill="none" stroke="#757575"><path d="M8.500 1.500h8v4h-8zM13.500 8.500h8v4h-8z" /><path d="M18 3h5l-2.500 3zM7 11h5L9.500 8z" fill="#757575" stroke="none" /></svg>
          </GradSide>
          <Fields>
            <Field>
              <FieldLabel htmlFor="gtype" $on>Type:</FieldLabel>
              <WideSelect><select id="gtype" /><Down w={8} h={6} /></WideSelect>
            </Field>
            <Field>
              <FieldLabel as="span">Stroke:</FieldLabel>
              <StrokeModes>
                {["within", "along", "across"].map((m, i) => (
                  <button key={m} aria-label={`Gradient ${m} stroke`}>
                    <svg width="14" height="14" viewBox="0 0 14 14" fill="none" stroke="currentColor"><path d={i === 1 ? "M.5.5v13h4v-8l-4-5M5 5.500h9M5 4.500h9" : "M.5 14V.5H14M5.500 14V5.500H14"} /><path d={i === 2 ? "M3 14V3h11" : i === 0 ? "M2 14V2h3v12z" : "M2 4v8"} strokeWidth="2" opacity=".6" /></svg>
                  </button>
                ))}
              </StrokeModes>
            </Field>
            <Field>
              <FieldLabel htmlFor="angle" aria-label="Angle"><svg width="13" height="10" viewBox="0 0 13 10" fill="none" stroke="#757575"><path d="M12.500 9.500H1L9.500.500M7 3.500c1.500 1.500 2 3.500 2 6" /></svg></FieldLabel>
              <DimCombo id="angle" label="Angle" />
            </Field>
            <Field>
              <FieldLabel htmlFor="ratio" aria-label="Aspect ratio"><svg width="15" height="14" viewBox="0 0 15 14" fill="none" stroke="#757575"><path d="M2.500 1v11M.5 3l2-2 2 2M.5 10l2 2 2-2M5 13.500h9" /><circle cx="9.500" cy="6" r="4" /></svg></FieldLabel>
              <DimCombo id="ratio" label="Aspect ratio" />
            </Field>
          </Fields>
        </GradTop>
        <GradBarRow><GradBar /><Trash /></GradBarRow>
        <GradBottom>
          <Field><FieldLabel htmlFor="gop">Opacity:</FieldLabel><DimCombo id="gop" /></Field>
          <Field><FieldLabel htmlFor="gloc">Location:</FieldLabel><DimCombo id="gloc" /></Field>
        </GradBottom>
        <Resize><ResizeDots /></Resize>
      </Body>
    </Panel>
  );
}

function LibrariesPanel() {
  return (
    <Panel $grow>
      <PanelTabs items={["Libraries", "Appearance", "Graphic Styles"]} active="Libraries" />
      <Body>
        <LibBar>
          <WideSelect $dim><select aria-label="Library" /><Down w={6} h={5} /></WideSelect>
          <ViewSwitch>
            <ViewButton $on aria-label="Grid view"><svg width="11" height="11" viewBox="0 0 11 11" fill="currentColor"><path d="M0 0h5v5H0zM6 0h5v5H6zM0 6h5v5H0zM6 6h5v5H6z" /></svg></ViewButton>
            <ViewButton aria-label="List view"><svg width="11" height="11" viewBox="0 0 11 11" fill="currentColor"><path d="M0 0h11v2H0zM0 3h11v2H0zM0 6h11v2H0zM0 9h11v2H0z" /></svg></ViewButton>
          </ViewSwitch>
        </LibBar>
        <LibMessage>
          <CloudError w={48} h={37} />
          <p>Something went wrong initializing</p>
          <p>Creative Cloud Libraries</p>
          <a href="#more">More information</a>
        </LibMessage>
        <PanelFoot $h={24} $gap={10} $l={4} $r={17}>
          <svg width="17" height="14" viewBox="0 0 17 14" fill="#8a8a8a"><path d="M1 10L11 1v8M1 10h6" fill="none" stroke="#8a8a8a" /><path d="M11 5h5v7h-5z" /><circle cx="9" cy="10" r="3" fill="#444" stroke="#8a8a8a" /></svg>
          <svg width="12" height="12" viewBox="0 0 12 12" fill="none" stroke="#8a8a8a" strokeWidth="1.500"><path d="M1 12L6 .800 11 12M3 8h6" /></svg>
          <SquareIcon aria-label="Add fill color" $bg="#a0a0a0" $b="#a0a0a0" />
          <SquareIcon aria-label="Add stroke color" $bg="#333" $b="#8a8a8a" />
          <Push />
          <AppBadge aria-label="Adobe Stock">St</AppBadge>
          <IconButton aria-label="Sync status" $c="#c4c4c4"><CloudError w={16} h={13} /></IconButton>
          <Trash />
        </PanelFoot>
        <Resize><ResizeDots /></Resize>
      </Body>
    </Panel>
  );
}

function LayersPanel() {
  return (
    <Panel>
      <PanelTabs items={["Layers", "Artboards"]} active="Layers" />
      <Body>
        <LayerTable>
          {LAYERS.map((l) => (
            <LayerRow key={l.name} $on={!l.locked}>
              <Cell aria-label={`Toggle ${l.name}`}><Eye /></Cell>
              <Cell aria-label={`Lock ${l.name}`}>{l.locked && <Lock />}</Cell>
              <LayerColor $c={l.color} />
              <IconButton aria-label={`Expand ${l.name}`} $c="#e2e2e2"><Right /></IconButton>
              <Thumb><svg width="16" height="16" viewBox="0 0 16 16">{thumbs[l.name]}</svg></Thumb>
              <LayerName>{l.name}</LayerName>
              <Target aria-label={`Target ${l.name}`}><Ring /></Target>
              {!l.locked && <SelectedCorner />}
            </LayerRow>
          ))}
        </LayerTable>
        <PanelFoot $h={20} $gap={14} $r={22}>
          <Count>5 Layers</Count>
          <Lens s={13} />
          <IconButton aria-label="Clipping mask"><svg width="11" height="11" viewBox="0 0 11 11" fill="none" stroke="currentColor"><path d="M.5.5h7v7h-7zM3.500 3.500h7v7h-7z" /><path d="M4 4h3v3H4z" fill="currentColor" /></svg></IconButton>
          <IconButton aria-label="New sublayer"><svg width="15" height="12" viewBox="0 0 15 12" fill="currentColor"><path d="M0 0h1v3h4V1l3 2.500L5 6V4H0zM8 2h7v9h-4V7H6V6.500zM6 8h4v3z" /></svg></IconButton>
          <IconButton aria-label="New layer"><Page /></IconButton>
          <IconButton aria-label="Delete layer"><Trash /></IconButton>
        </PanelFoot>
      </Body>
    </Panel>
  );
}

export default function App() {
  return (
    <Screen>
      <Global />
      <MenuBar>
        <Logo>Ai</Logo>
        {MENUS.map((m) => <MenuItem key={m}>{m}</MenuItem>)}
        <Group $l={2}><Rule /></Group>
        <Tools>
          <AppBadge $dim>Br</AppBadge>
          <AppBadge>St</AppBadge>
          <ToolPair>
            <IconButton aria-label="Arrange documents"><Layout /><Down /></IconButton>
            <IconButton aria-label="GPU performance"><Rocket /></IconButton>
          </ToolPair>
        </Tools>
        <Push />
        <Rule />
        <WorkspacePick><select aria-label="Workspace"><option>Essentials</option></select><Down w={6} h={4} /></WorkspacePick>
        <Rule />
        <SearchBox><Lens /><input aria-label="Search" /></SearchBox>
        <WindowButtons>
          <WindowButton $w={27} aria-label="Minimize"><svg width="10" height="9" viewBox="0 0 10 9" fill="currentColor"><path d="M0 5h10v3H0z" /></svg></WindowButton>
          <WindowButton $w={28} aria-label="Restore"><svg width="12" height="10" viewBox="0 0 12 10" fill="none" stroke="currentColor" strokeWidth="1.600"><path d="M5 3.500V.8h6v5H8M1 4h6v5H1z" /></svg></WindowButton>
          <WindowButton $w={47} aria-label="Close"><Cross s={10} t={2} /></WindowButton>
        </WindowButtons>
      </MenuBar>
      <Controls />
      <Workspace>
        <Document />
        <Dock>
          <DockHead><Double /></DockHead>
          <ColorPanel />
          <SymbolsPanel />
          <GradientPanel />
          <LibrariesPanel />
          <LayersPanel />
        </Dock>
      </Workspace>
      <TaskBar>
        <TaskSearch />
        <TaskItem />
        <Clock>9:27 PM</Clock>
        <ShowDesktop />
      </TaskBar>
    </Screen>
  );
}
